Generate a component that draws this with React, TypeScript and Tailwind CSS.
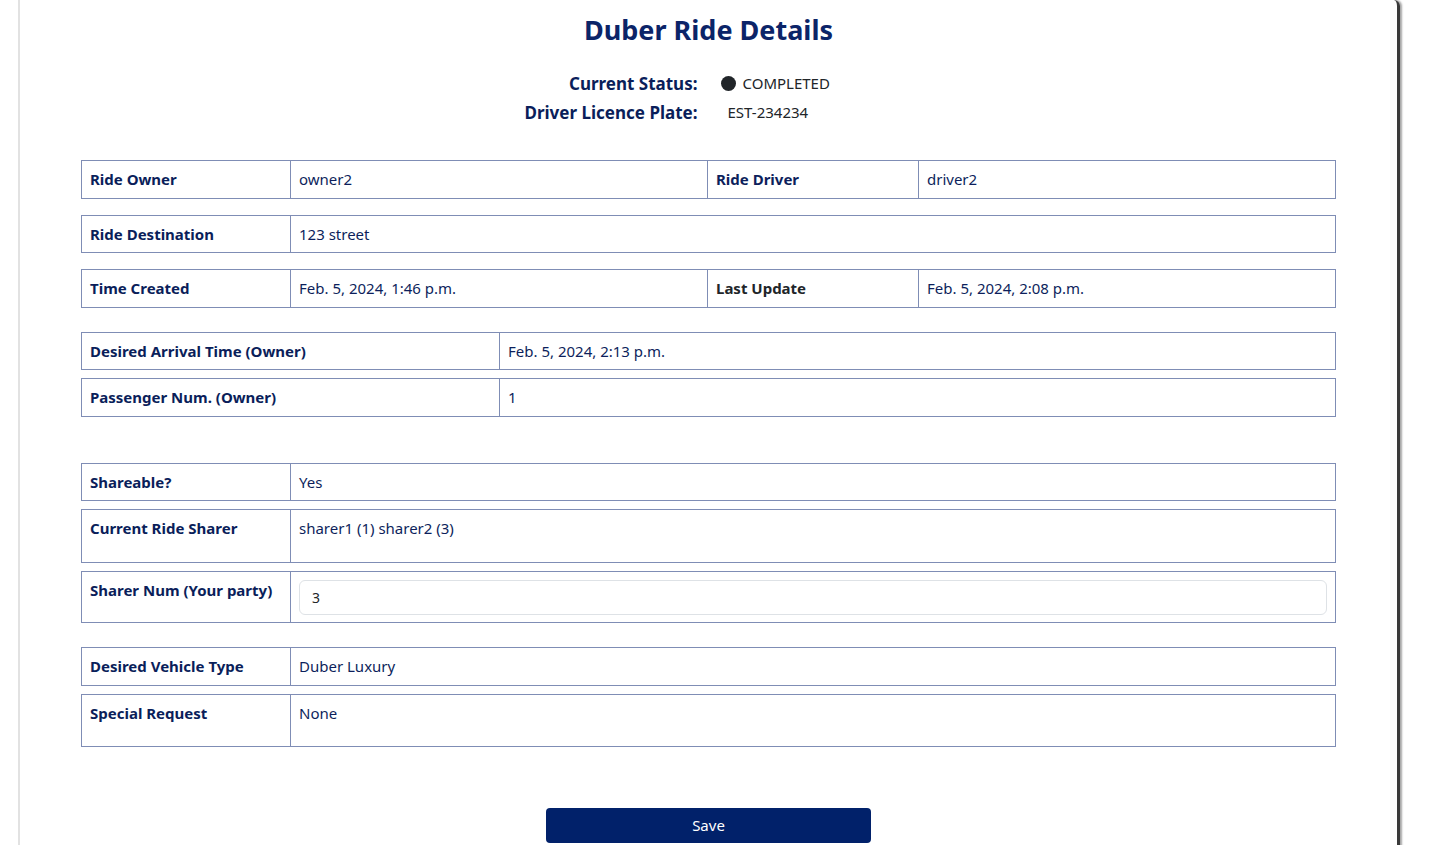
import React from "react";

const L = "px-2 py-[6px] font-bold text-[#0a1e5a]";
const V = "px-2 py-[6px] text-[#0d1f5c] border-l border-[#7f8db5]";

function Row({ children, cols, h }: { children: React.ReactNode; cols: string; h?: string }) {
  return (
    <div className={`grid ${cols} border border-[#7f8db5] ${h ?? ""}`}>{children}</div>
  );
}

export default function App() {
  return (
    <div
      className="min-h-screen bg-white pl-[18px] text-[15px] leading-[24.5px]"
      style={{ fontFamily: '"Noto Sans", "Open Sans", sans-serif' }}
    >
      <div className="w-[1382px] min-h-[900px] border-l-2 border-[#e2e2e2] border-r-[3px] border-r-[#3a3a3a] rounded-tr-[6px] shadow-[2px_0_2px_rgba(0,0,0,0.35)] px-[61px] pt-[12px]">
        <h1 className="text-center text-[27px] leading-[36px] font-bold text-[#0b2468]">Duber Ride Details</h1>

        <div className="mt-[21px] grid grid-cols-2">
          <div className="text-right pr-[11px] text-[17px] leading-[29px] font-bold text-[#0a1e5a]">Current Status:</div>
          <div className="pl-[12px] flex items-center gap-[7px] text-[15px] text-[#212529]">
            <span className="inline-block w-[15px] h-[15px] rounded-full bg-[#212529]" />
            <span>COMPLETED</span>
          </div>
          <div className="text-right pr-[11px] text-[17px] leading-[29px] font-bold text-[#0a1e5a]">Driver Licence Plate:</div>
          <div className="pl-[19px] flex items-center text-[15px] text-[#212529]">EST-234234</div>
        </div>

        <div className="mt-[33px] flex flex-col">
          <Row cols="grid-cols-[208px_417px_211px_1fr]">
            <div className={L}>Ride Owner</div>
            <div className={V}>owner2</div>
            <div className={V + " font-bold text-[#0a1e5a]"}>Ride Driver</div>
            <div className={V}>driver2</div>
          </Row>
          <div className="mt-[16px]">
            <Row cols="grid-cols-[208px_1fr]">
              <div className={L}>Ride Destination</div>
              <div className={V}>123 street</div>
            </Row>
          </div>
          <div className="mt-[16px]">
            <Row cols="grid-cols-[208px_417px_211px_1fr]">
              <div className={L}>Time Created</div>
              <div className={V}>Feb. 5, 2024, 1:46 p.m.</div>
              <div className={V + " font-bold !text-[#212529]"}>Last Update</div>
              <div className={V}>Feb. 5, 2024, 2:08 p.m.</div>
            </Row>
          </div>

          <div className="mt-[24px] flex flex-col gap-[8px]">
            <Row cols="grid-cols-[417px_1fr]">
              <div className={L}>Desired Arrival Time (Owner)</div>
              <div className={V}>Feb. 5, 2024, 2:13 p.m.</div>
            </Row>
            <Row cols="grid-cols-[417px_1fr]">
              <div className={L}>Passenger Num. (Owner)</div>
              <div className={V}>1</div>
            </Row>
          </div>

          <div className="mt-[46px] flex flex-col gap-[8px]">
            <Row cols="grid-cols-[208px_1fr]">
              <div className={L}>Shareable?</div>
              <div className={V}>Yes</div>
            </Row>
            <Row cols="grid-cols-[208px_1fr]" h="h-[54px]">
              <div className={L}>Current Ride Sharer</div>
              <div className={V}>sharer1 (1) sharer2 (3)</div>
            </Row>
            <Row cols="grid-cols-[208px_1fr]" h="h-[52px]">
              <div className={L}>Sharer Num (Your party)</div>
              <div className="p-2 border-l border-[#7f8db5]">
                <input
                  defaultValue="3"
                  className="w-full h-[35px] rounded-[6px] border border-[#dee2e6] px-3 text-[14px] text-[#212529] outline-none"
                  style={{ fontFamily: '"Noto Sans", sans-serif' }}
                />
              </div>
            </Row>
          </div>

          <div className="mt-[24px] flex flex-col gap-[8.5px]">
            <Row cols="grid-cols-[208px_1fr]">
              <div className={L}>Desired Vehicle Type</div>
              <div className={V}>Duber Luxury</div>
            </Row>
            <Row cols="grid-cols-[208px_1fr]" h="h-[53px]">
              <div className={L}>Special Request</div>
              <div className={V}>None</div>
            </Row>
          </div>

          <div className="mt-[61px] flex justify-center">
            <button className="w-[325px] h-[35px] rounded-[4px] bg-[#01216a] text-white text-[15px]">Save</button>
          </div>
        </div>
      </div>
    </div>
  );
}
